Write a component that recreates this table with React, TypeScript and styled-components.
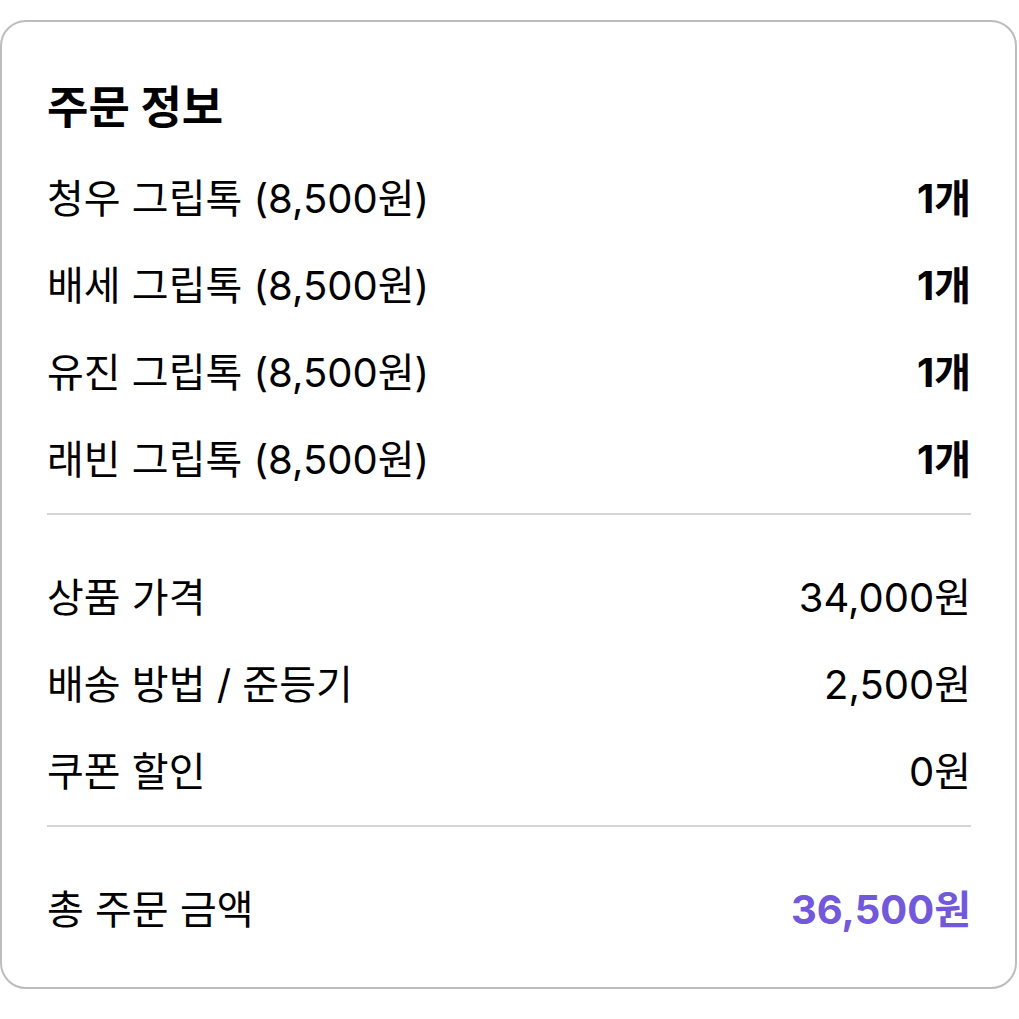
import * as React from 'react';
import styled, { createGlobalStyle } from 'styled-components';

const Global = createGlobalStyle`
    body {
        margin: 0;
        background: #ffffff;
        font-family: Inter, "Noto Sans CJK KR", "Noto Sans", sans-serif;
        color: #000000;
    }
`;

const Card = styled.section`
    margin: 20px 0 0 0;
    width: 1017px;
    box-sizing: border-box;
    border: 2px solid #bdbdbd;
    border-radius: 26px;
    padding: 62px 44px 37px 45px;
    background: #ffffff;
`;

const Title = styled.h2`
    margin: 0 0 20px 0;
    font-size: 45px;
    line-height: 48px;
    font-weight: 700;
`;

const Row = styled.div`
    height: 87px;
    display: flex;
    align-items: center;
    justify-content: space-between;
    font-size: 40px;
`;

const Label = styled.span`
    font-weight: 400;
`;

const Value = styled.span<{ $bold?: boolean; $accent?: boolean }>`
    font-weight: ${p => (p.$bold ? 700 : 400)};
    color: ${p => (p.$accent ? '#7258db' : '#000000')};
`;

const Divider = styled.hr`
    border: none;
    height: 2px;
    background: #d6d6d6;
    margin: 13px 0 36px 0;
`;

const items = ['청우', '배세', '유진', '래빈'];

const summary = [
    { label: '상품 가격', value: '34,000원' },
    { label: '배송 방법 / 준등기', value: '2,500원' },
    { label: '쿠폰 할인', value: '0원' },
];

export default function App() {
    return (
        <>
            <Global />
            <Card>
                <Title>주문 정보</Title>
                {items.map(name => (
                    <Row key={name}>
                        <Label>{name} 그립톡 (8,500원)</Label>
                        <Value $bold>1개</Value>
                    </Row>
                ))}
                <Divider />
                {summary.map(s => (
                    <Row key={s.label}>
                        <Label>{s.label}</Label>
                        <Value>{s.value}</Value>
                    </Row>
                ))}
                <Divider />
                <Row>
                    <Label>총 주문 금액</Label>
                    <Value $bold $accent>36,500원</Value>
                </Row>
            </Card>
        </>
    );
}
